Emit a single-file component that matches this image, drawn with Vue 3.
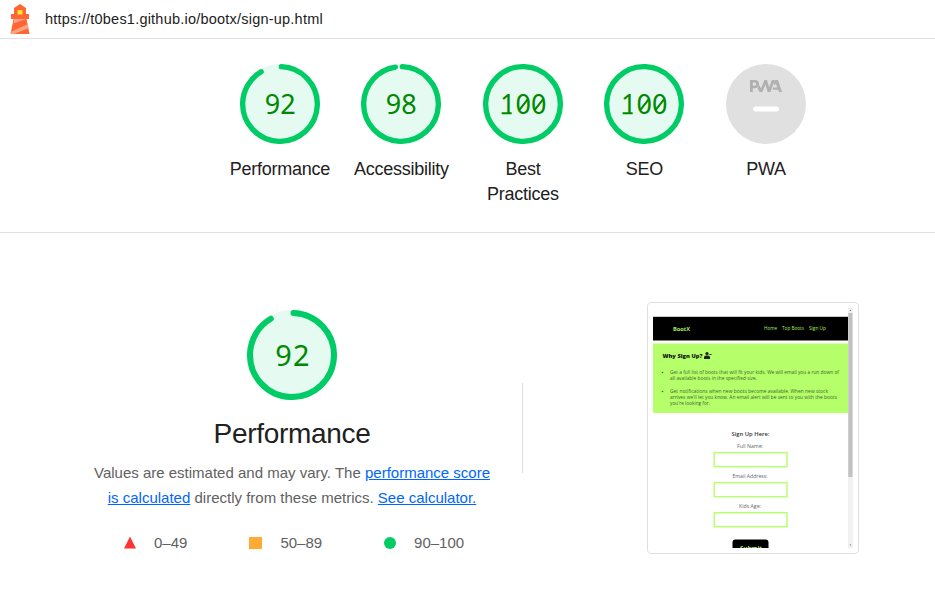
<script setup>
const circumference = 2 * Math.PI * 56
const gauges = [
  { score: 92, label: 'Performance' },
  { score: 98, label: 'Accessibility' },
  { score: 100, label: 'Best Practices' },
  { score: 100, label: 'SEO' },
]
function dash(score) {
  if (score === 100) return `${circumference} 0`
  return `${(score / 100) * circumference - 4} ${circumference}`
}
const legend = [
  { kind: 'fail', range: '0–49' },
  { kind: 'average', range: '50–89' },
  { kind: 'pass', range: '90–100' },
]
const fields = [
  { label: 'Full Name:', x: 84, w: 26, y: 140, box: 145 },
  { label: 'Email Address:', x: 79.5, w: 35, y: 170, box: 175 },
  { label: 'Kids Age:', x: 86, w: 22, y: 200.3, box: 205 },
]
const copy = [
  { t: 'Get a full list of boots that will fit your kids. We will email you a run down of', y: 66, w: 169 },
  { t: 'all available boots in the specified size.', y: 71.7, w: 87 },
  { t: 'Get notifications when new boots become available. When new stock', y: 84.8, w: 158 },
  { t: "arrives we'll let you know. An email alert will be sent to you with the boots", y: 90.7, w: 167 },
  { t: "you're looking for.", y: 96.5, w: 40 },
]
</script>

<template>
  <div class="report">
    <header class="topbar">
      <svg class="logo" width="20" height="30" viewBox="0 0 20 30">
        <path d="M10 0 16 4V10H19V15H16.5L19.5 30H.5L3.5 15H1V10H4V4Z" fill="#ff6633" />
        <path d="M3.4 19.5 15.8 15H4.2ZM1.5 27.5 17.7 20.3 18.7 24 4 30H1Z" fill="#ffa385" />
        <rect x="7.5" y="6" width="5" height="4.5" fill="#ffe52e" />
      </svg>
      <span class="url">https://t0bes1.github.io/bootx/sign-up.html</span>
    </header>

    <section class="scores">
      <div v-for="g in gauges" :key="g.label" class="gauge">
        <svg width="80" height="80" viewBox="0 0 120 120">
          <circle cx="60" cy="60" r="60" fill="#e5faf0" />
          <circle class="arc" cx="60" cy="60" r="56" :stroke-dasharray="dash(g.score)" transform="rotate(-87.95 60 60)" />
          <text class="num" x="60.3" y="75.5" font-size="40.5">{{ g.score }}</text>
          <g v-if="g.score === 100" class="mono">
            <path d="M28 74H43M54 69.5 67 53M77 69.5 90 53" />
          </g>
        </svg>
        <span class="label">{{ g.label }}</span>
      </div>
      <div class="gauge">
        <svg width="80" height="80" viewBox="0 0 80 80">
          <circle cx="40" cy="40" r="40" fill="#e0e0e0" />
          <g fill="#b0b0b0">
            <path fill-rule="evenodd" d="M24 16H29Q33 16 33 20T29 24.2H26.8V28H24ZM26.8 18.5V21.8H28.7Q30.3 21.8 30.3 20.1T28.7 18.5Z" />
            <path d="M31.6 24.3 33.2 21 35 24.5 38.4 16H41L43.2 23.5 45.8 16H48.7L44.4 28H41.7L39.5 20.7 36.2 28H33.5Z" />
            <path d="M49 16H52L56 28H52.9L52.2 25.8H46.5L47.3 23.4H51.2L49.7 19.2 48.6 21.8 47.6 19.6Z" />
          </g>
          <rect x="27" y="42.5" width="26" height="5" rx="2.5" fill="#fff" />
        </svg>
        <span class="label">PWA</span>
      </div>
    </section>

    <main class="category">
      <section class="summary">
        <svg width="90" height="90" viewBox="0 0 120 120">
          <circle cx="60" cy="60" r="60" fill="#e5faf0" />
          <circle class="arc" cx="60" cy="60" r="56" :stroke-dasharray="dash(92)" transform="rotate(-87.95 60 60)" />
          <text class="num" x="60.5" y="75" font-size="38.5" textLength="46">92</text>
        </svg>
        <h1>Performance</h1>
        <p>Values are estimated and may vary. The <a>performance score<br>is calculated</a> directly from these metrics. <a>See calculator.</a></p>
        <div class="legend">
          <span v-for="l in legend" :key="l.kind" class="range"><i :class="l.kind"></i>{{ l.range }}</span>
        </div>
      </section>
      <div class="divider"></div>
      <figure class="shot">
        <svg width="200" height="240" viewBox="0 0 200 240">
          <rect y="8" width="195" height="1" fill="#ccc" />
          <rect y="9" width="195" height="23.5" fill="#000" />
          <rect y="35.5" width="195" height="69.5" fill="#b5ff6b" />
          <g fill="#a6eb62">
            <text x="20" y="22.8" font-size="6" font-weight="700" textLength="17" lengthAdjust="spacingAndGlyphs">BootX</text>
            <text x="111" y="22.3" font-size="4.6" textLength="13" lengthAdjust="spacingAndGlyphs">Home</text>
            <text x="129" y="22.3" font-size="4.6" textLength="22" lengthAdjust="spacingAndGlyphs">Top Boots</text>
            <text x="156" y="22.3" font-size="4.6" textLength="17" lengthAdjust="spacingAndGlyphs">Sign Up</text>
          </g>
          <text x="9.5" y="50.3" font-size="5.7" font-weight="800" fill="#111" textLength="40" lengthAdjust="spacingAndGlyphs">Why Sign Up?</text>
          <g fill="#222">
            <circle cx="54" cy="45.5" r="1.6" />
            <path d="M51 51V49.5Q51 47.6 53 47.6H55Q57 47.6 57 49.5V51ZM56.5 46H58.5V47H56.5Z" />
          </g>
          <g fill="#426526">
            <circle cx="9.5" cy="64.5" r=".8" />
            <circle cx="9.5" cy="83.5" r=".8" />
            <text v-for="c in copy" :key="c.t" x="17" :y="c.y" font-size="4.6" :textLength="c.w" lengthAdjust="spacingAndGlyphs">{{ c.t }}</text>
          </g>
          <text x="78.5" y="128.2" font-size="5.6" font-weight="600" fill="#333" textLength="38" lengthAdjust="spacingAndGlyphs">Sign Up Here:</text>
          <g v-for="f in fields" :key="f.label">
            <text :x="f.x" :y="f.y" font-size="4.7" fill="#666" :textLength="f.w" lengthAdjust="spacingAndGlyphs">{{ f.label }}</text>
            <rect x="61.2" :y="f.box - .3" width="72.8" height="14" fill="#fff" stroke="#b9ff76" stroke-width="1.5" />
          </g>
          <rect x="79.5" y="231.5" width="36" height="14" rx="3" fill="#000" />
          <text x="87" y="241.6" font-size="5.8" font-weight="700" fill="#a6eb62" textLength="22" lengthAdjust="spacingAndGlyphs">Submit</text>
          <rect x="195" width="5" height="240" fill="#f1f1f1" />
          <rect x="195.3" y="5" width="4.2" height="164" fill="#c1c1c1" />
          <path d="M196.5 3 197.5 1.8 198.5 3ZM196.5 236.5 197.5 237.8 198.5 236.5Z" fill="#777" />
        </svg>
      </figure>
    </main>
  </div>
</template>

<style>
body {
  margin: 0;
  background: #fff;
}
</style>

<style scoped>
.report {
  width: 935px;
  height: 592px;
  overflow: hidden;
  box-sizing: border-box;
  font-family: "Liberation Sans", Arial, sans-serif;
  color: #212121;
}
.topbar {
  height: 38px;
  display: flex;
  align-items: center;
  gap: 15px;
  padding-left: 10px;
  border-bottom: 1px solid #e0e0e0;
}
.url {
  font-size: 14.5px;
  line-height: 20px;
  letter-spacing: 0.22px;
}
svg {
  display: block;
  flex: none;
}
.scores {
  box-sizing: border-box;
  height: 194px;
  padding: 25px 0 0 219.2px;
  display: flex;
  border-bottom: 1px solid #e0e0e0;
}
.gauge {
  flex: none;
  width: 121.5px;
  display: flex;
  flex-direction: column;
  align-items: center;
}
.label {
  width: 102px;
  margin-top: 13px;
  font-size: 18px;
  line-height: 25px;
  letter-spacing: -0.25px;
  text-align: center;
}
.arc {
  fill: none;
  stroke: #00cc66;
  stroke-width: 8;
  stroke-linecap: round;
}
.num {
  font-family: "Noto Sans", sans-serif;
  fill: #080;
  text-anchor: middle;
}
.mono {
  fill: none;
  stroke: #080;
  stroke-width: 3;
}
.category {
  display: flex;
  align-items: flex-start;
}
.summary {
  width: 460px;
  padding: 77px 0 0 62px;
  box-sizing: content-box;
  display: flex;
  flex-direction: column;
  align-items: center;
}
h1 {
  margin: 18px 0 0;
  font-size: 28px;
  line-height: 32px;
  font-weight: 400;
  letter-spacing: -0.3px;
}
p {
  margin: 10px 0 0;
  font-size: 15px;
  line-height: 25px;
  color: #616161;
  text-align: center;
  white-space: nowrap;
}
a {
  color: #06f;
  text-decoration: underline;
}
.legend {
  align-self: stretch;
  display: flex;
  gap: 62px;
  margin: 20px 0 0 62px;
  font-size: 15px;
  line-height: 25px;
  color: #616161;
}
.range {
  display: flex;
  align-items: center;
  gap: 18px;
}
i {
  width: 12px;
  height: 12px;
}
.fail {
  background: #f33;
  clip-path: polygon(50% 0, 100% 100%, 0 100%);
}
.average {
  width: 13px;
  background: #fa3;
}
.pass {
  border-radius: 50%;
  background: #0c6;
}
.divider {
  width: 1px;
  height: 90px;
  margin-top: 150px;
  background: #e0e0e0;
}
.shot {
  margin: 69px 0 0 124px;
  padding: 5px;
  border: 1px solid #e0e0e0;
  border-radius: 4px;
}
.shot svg {
  font-family: "Open Sans", sans-serif;
}
</style>
